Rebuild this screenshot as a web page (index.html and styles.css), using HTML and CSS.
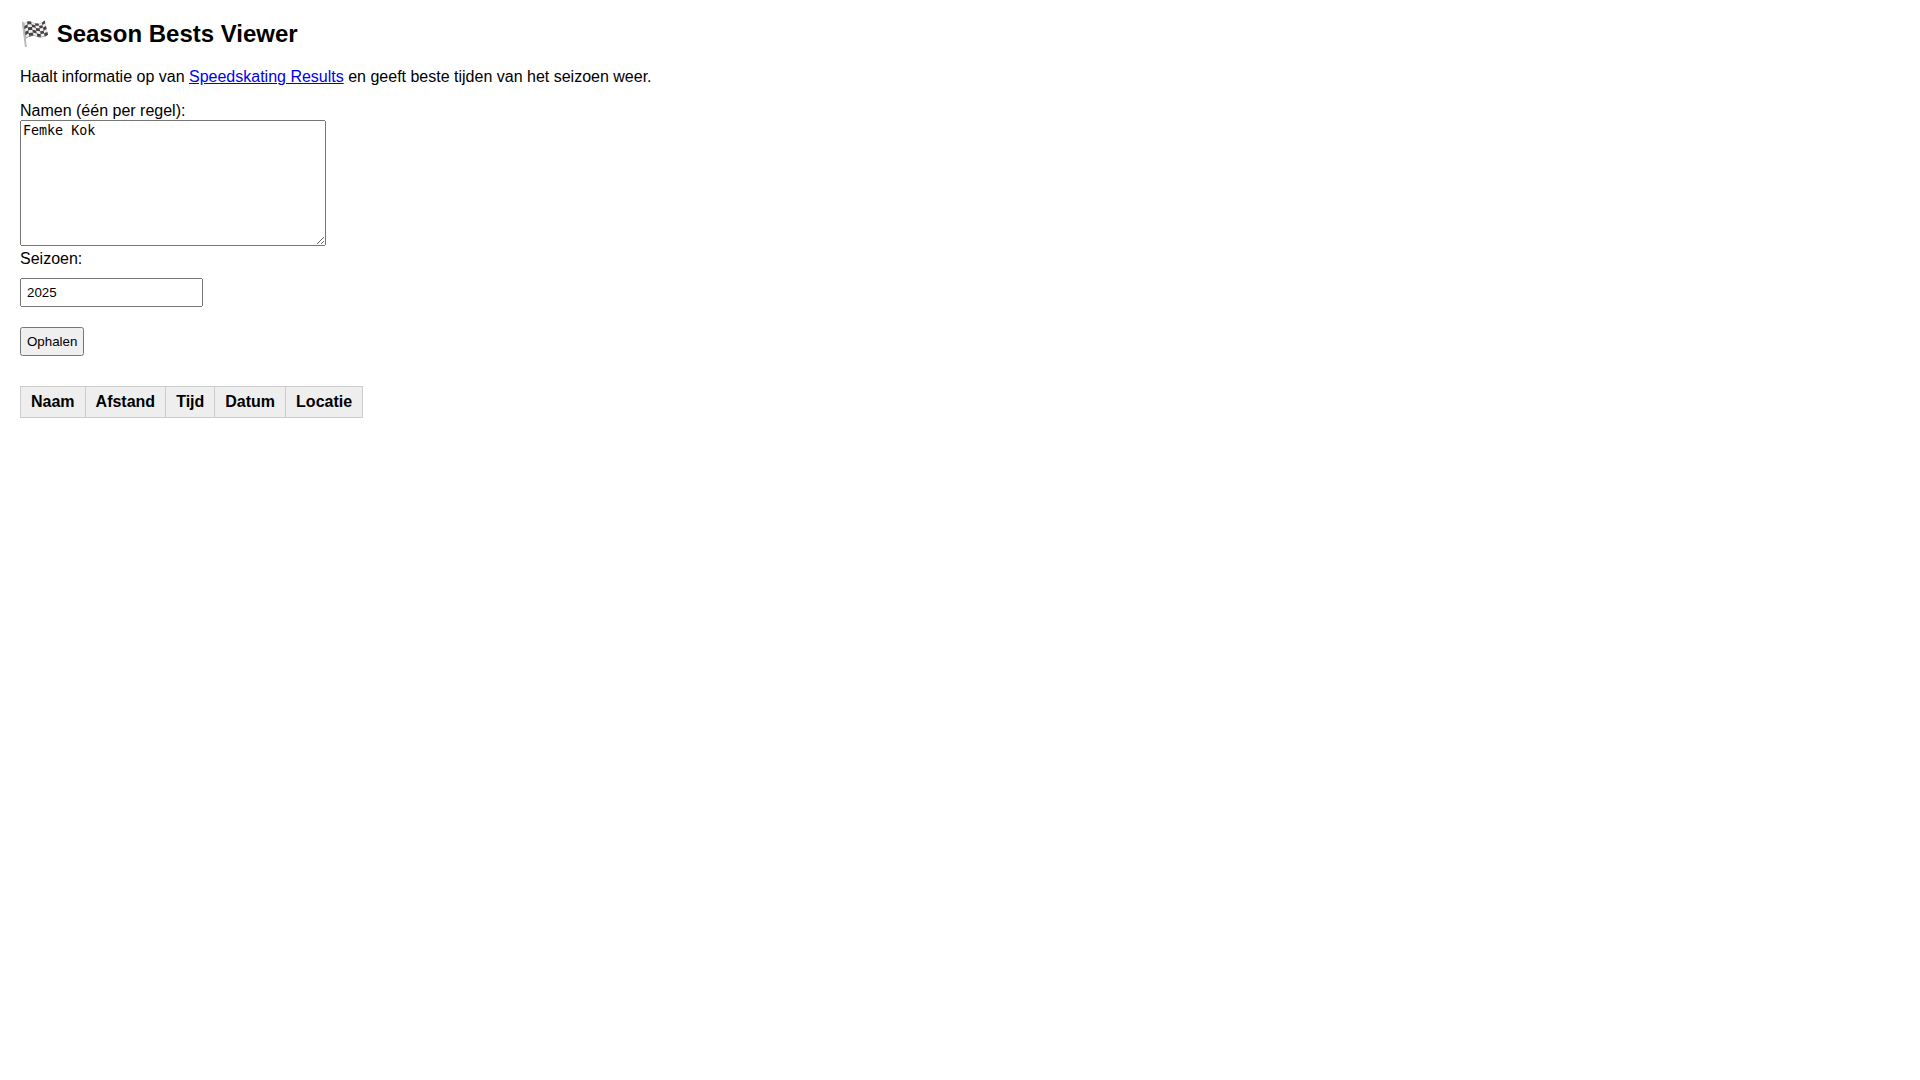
FILE: index.html
```html
<!DOCTYPE html>
<html lang="nl">

<head>
    <meta charset="UTF-8" />
    <title>Season Bests Viewer</title>
    <link rel="stylesheet" href="styles.css">
</head>

<body>
    <h1>🏁 Season Bests Viewer</h1>
    <p>Haalt informatie op van <a href="#">Speedskating Results</a> en geeft beste tijden van het seizoen weer.</p>

    <form>
        <label for="names">Namen (één per regel):</label><br>
        <textarea id="names" rows="6">Femke Kok</textarea><br>
        <label for="season">Seizoen:</label><br>
        <input type="text" id="season" value="2025"><br>
        <button type="button">Ophalen</button>
    </form>

    <table>
        <thead>
            <tr>
                <th>Naam</th>
                <th>Afstand</th>
                <th>Tijd</th>
                <th>Datum</th>
                <th>Locatie</th>
            </tr>
        </thead>
        <tbody></tbody>
    </table>
</body>

</html>
```

FILE: styles.css
```css
body {
    margin: 0;
    padding: 20px;
    font-family: "Liberation Sans", Arial, sans-serif;
    font-size: 16px;
    color: #000;
    background: #fff;
}

h1 {
    margin: 0 0 20px;
    font-size: 24px;
}

p {
    margin: 16px 0;
}

textarea {
    width: 300px;
    height: 120px;
}

input {
    width: 169px;
    margin: 10px 0;
    padding: 5px;
}

button {
    margin: 10px 0;
    padding: 5px;
}

table {
    margin-top: 20px;
    border-collapse: collapse;
}

th {
    padding: 6px 10px;
    border: 1px solid #ccc;
    background: #eee;
}
```
